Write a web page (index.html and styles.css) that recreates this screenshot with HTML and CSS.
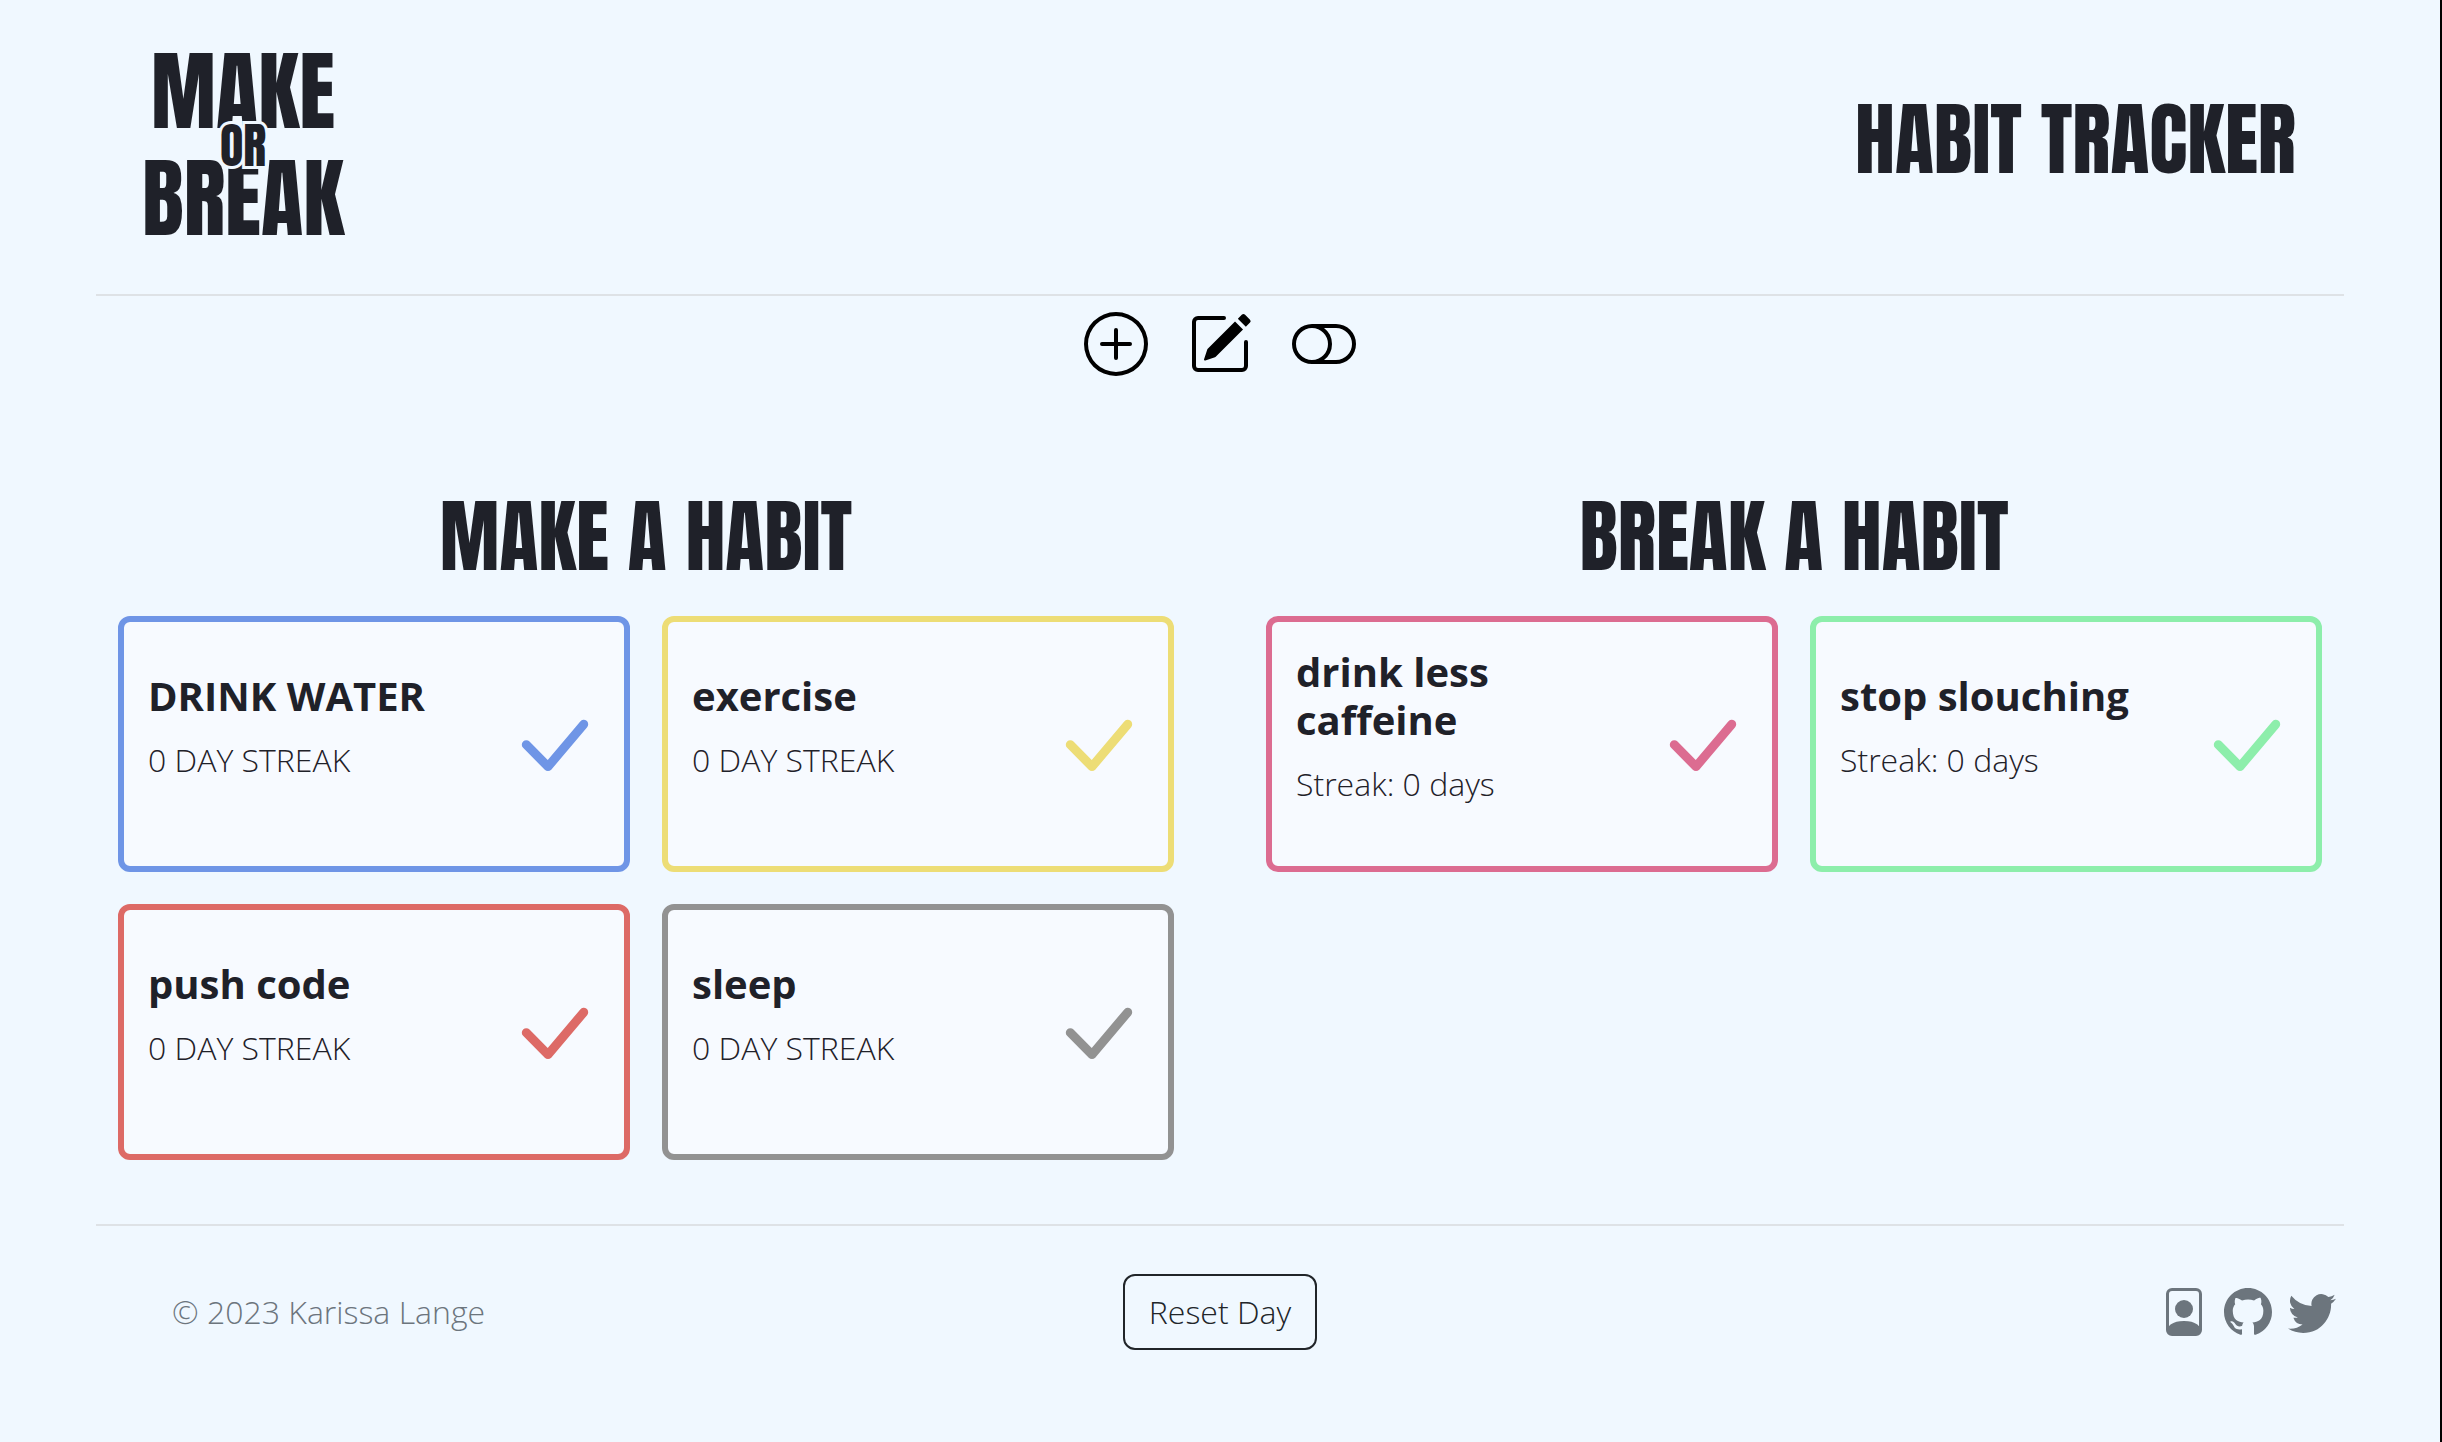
FILE: index.html
```html
<!DOCTYPE html>
<html lang="en">
<head>
<meta charset="utf-8">
<meta name="viewport" content="width=device-width, initial-scale=1">
<title>Make or Break Habit Tracker</title>
<link rel="stylesheet" href="styles.css">
</head>
<body>
<svg class="sprite" aria-hidden="true">
  <symbol id="check" viewBox="0 0 128 128"><path d="M38.3 64.7 60 86.6 95.7 44.3" fill="none" stroke="currentColor" stroke-width="9" stroke-linecap="round" stroke-linejoin="round"/></symbol>
</svg>
<div class="page">
  <header class="header">
    <a class="logo" href="#">
      <span class="logo-line">MAKE</span>
      <span class="logo-or">OR</span>
      <span class="logo-line">BREAK</span>
    </a>
    <h1 class="heading">HABIT TRACKER</h1>
  </header>

  <nav class="toolbar" aria-label="Habit actions">
    <button class="icon-button" type="button" aria-label="Add habit">
      <svg class="icon" viewBox="0 0 16 16"><path d="M8 15A7 7 0 1 1 8 1a7 7 0 0 1 0 14zm0 1A8 8 0 1 0 8 0a8 8 0 0 0 0 16z"/><path d="M8 4a.5.5 0 0 1 .5.5v3h3a.5.5 0 0 1 0 1h-3v3a.5.5 0 0 1-1 0v-3h-3a.5.5 0 0 1 0-1h3v-3A.5.5 0 0 1 8 4z"/></svg>
    </button>
    <button class="icon-button" type="button" aria-label="Edit habits">
      <svg class="icon" viewBox="0 0 16 16"><path d="M15.502 1.94a.5.5 0 0 1 0 .706L14.459 3.69l-2-2L13.502.646a.5.5 0 0 1 .707 0l1.293 1.293zm-1.75 2.456-2-2L4.939 9.21a.5.5 0 0 0-.121.196l-.805 2.414a.25.25 0 0 0 .316.316l2.414-.805a.5.5 0 0 0 .196-.12l6.813-6.814z"/><path fill-rule="evenodd" d="M1 13.5A1.5 1.5 0 0 0 2.5 15h11a1.5 1.5 0 0 0 1.5-1.5v-6a.5.5 0 0 0-1 0v6a.5.5 0 0 1-.5.5h-11a.5.5 0 0 1-.5-.5v-11a.5.5 0 0 1 .5-.5H9a.5.5 0 0 0 0-1H2.5A1.5 1.5 0 0 0 1 2.5v11z"/></svg>
    </button>
    <button class="icon-button" type="button" aria-label="Toggle theme">
      <svg class="icon" viewBox="0 0 16 16"><path d="M11 4a4 4 0 0 1 0 8H8a4.992 4.992 0 0 0 2-4 4.992 4.992 0 0 0-2-4h3zm-6 8a4 4 0 1 1 0-8 4 4 0 0 1 0 8zM0 8a5 5 0 0 0 5 5h6a5 5 0 0 0 0-10H5a5 5 0 0 0-5 5z"/></svg>
    </button>
  </nav>

  <main class="habits">
    <section class="column">
      <h2 class="heading">MAKE A HABIT</h2>
      <div class="cards">
        <article class="card blue">
          <div class="card-text"><h3 class="card-title">DRINK WATER</h3><p class="streak">0 DAY STREAK</p></div>
          <button class="icon-button" type="button" aria-label="Complete drink water"><svg class="check"><use href="#check"/></svg></button>
        </article>
        <article class="card yellow">
          <div class="card-text"><h3 class="card-title">exercise</h3><p class="streak">0 DAY STREAK</p></div>
          <button class="icon-button" type="button" aria-label="Complete exercise"><svg class="check"><use href="#check"/></svg></button>
        </article>
        <article class="card red">
          <div class="card-text"><h3 class="card-title">push code</h3><p class="streak">0 DAY STREAK</p></div>
          <button class="icon-button" type="button" aria-label="Complete push code"><svg class="check"><use href="#check"/></svg></button>
        </article>
        <article class="card gray">
          <div class="card-text"><h3 class="card-title">sleep</h3><p class="streak">0 DAY STREAK</p></div>
          <button class="icon-button" type="button" aria-label="Complete sleep"><svg class="check"><use href="#check"/></svg></button>
        </article>
      </div>
    </section>
    <section class="column">
      <h2 class="heading">BREAK A HABIT</h2>
      <div class="cards">
        <article class="card pink">
          <div class="card-text"><h3 class="card-title">drink less caffeine</h3><p class="streak">Streak: 0 days</p></div>
          <button class="icon-button" type="button" aria-label="Complete drink less caffeine"><svg class="check"><use href="#check"/></svg></button>
        </article>
        <article class="card green">
          <div class="card-text"><h3 class="card-title">stop slouching</h3><p class="streak">Streak: 0 days</p></div>
          <button class="icon-button" type="button" aria-label="Complete stop slouching"><svg class="check"><use href="#check"/></svg></button>
        </article>
      </div>
    </section>
  </main>

  <footer class="footer">
    <p class="copyright">© 2023 Karissa Lange</p>
    <button class="reset" type="button">Reset Day</button>
    <div class="social">
      <a href="#" aria-label="Portfolio"><svg class="social-icon" viewBox="0 0 16 16"><path d="M12 1a1 1 0 0 1 1 1v10.755S12 11 8 11s-5 1.755-5 1.755V2a1 1 0 0 1 1-1h8zM4 0a2 2 0 0 0-2 2v12a2 2 0 0 0 2 2h8a2 2 0 0 0 2-2V2a2 2 0 0 0-2-2H4z"/><path d="M8 10a3 3 0 1 0 0-6 3 3 0 0 0 0 6z"/></svg></a>
      <a href="#" aria-label="GitHub"><svg class="social-icon" viewBox="0 0 16 16"><path d="M8 0C3.58 0 0 3.58 0 8c0 3.54 2.29 6.53 5.47 7.59.4.07.55-.17.55-.38 0-.19-.01-.82-.01-1.49-2.01.37-2.53-.49-2.69-.94-.09-.23-.48-.94-.82-1.13-.28-.15-.68-.52-.01-.53.63-.01 1.08.58 1.23.82.72 1.21 1.87.87 2.33.66.07-.52.28-.87.51-1.07-1.78-.2-3.64-.89-3.64-3.95 0-.87.31-1.59.82-2.15-.08-.2-.36-1.02.08-2.12 0 0 .67-.21 2.2.82.64-.18 1.32-.27 2-.27.68 0 1.36.09 2 .27 1.53-1.04 2.2-.82 2.2-.82.44 1.1.16 1.92.08 2.12.51.56.82 1.27.82 2.15 0 3.07-1.87 3.75-3.65 3.95.29.25.54.73.54 1.48 0 1.07-.01 1.93-.01 2.2 0 .21.15.46.55.38A8.012 8.012 0 0 0 16 8c0-4.42-3.58-8-8-8z"/></svg></a>
      <a href="#" aria-label="Twitter"><svg class="social-icon" viewBox="0 0 16 16"><path d="M5.026 15c6.038 0 9.341-5.003 9.341-9.334 0-.14 0-.282-.006-.422A6.685 6.685 0 0 0 16 3.542a6.658 6.658 0 0 1-1.889.518 3.301 3.301 0 0 0 1.447-1.817 6.533 6.533 0 0 1-2.087.793A3.286 3.286 0 0 0 7.875 6.03a9.325 9.325 0 0 1-6.767-3.429 3.289 3.289 0 0 0 1.018 4.382A3.323 3.323 0 0 1 .64 6.575v.045a3.288 3.288 0 0 0 2.632 3.218 3.203 3.203 0 0 1-.865.115 3.23 3.23 0 0 1-.614-.057 3.283 3.283 0 0 0 3.067 2.277A6.588 6.588 0 0 1 .78 13.58a6.32 6.32 0 0 1-.78-.045A9.344 9.344 0 0 0 5.026 15z"/></svg></a>
    </div>
  </footer>
</div>
</body>
</html>
```
FILE: styles.css
```css
* {
  box-sizing: border-box;
  margin: 0;
  padding: 0;
}

body {
  background: #f0f8ff;
  color: #1f2129;
  font-family: "Open Sans", sans-serif;
  font-size: 32px;
  font-weight: 300;
  line-height: 48px;
}

.sprite {
  position: absolute;
  width: 0;
  height: 0;
}

.page {
  min-height: 100vh;
  padding: 0 96px;
  border-right: 2px solid #000;
}

.header {
  display: flex;
  align-items: center;
  justify-content: space-between;
  padding: 38px 48px 42px 46px;
  border-bottom: 2px solid #dee2e6;
}

.logo {
  position: relative;
  display: flex;
  flex-direction: column;
  align-items: center;
  color: inherit;
  font-family: "Anton", sans-serif;
  font-size: 87px;
  font-weight: 400;
  line-height: 107px;
  text-decoration: none;
}

.logo-or {
  position: absolute;
  top: 84px;
  z-index: 1;
  font-size: 48px;
  line-height: 48px;
  -webkit-text-stroke: 6px #f0f8ff;
  paint-order: stroke fill;
}

.heading {
  font-family: "Anton", sans-serif;
  font-size: 80px;
  font-weight: 400;
  line-height: 96px;
  text-align: center;
}

.header .heading {
  margin-bottom: 12px;
}

.toolbar {
  display: flex;
  justify-content: center;
  gap: 40px;
  padding: 16px 0 112px;
}

.icon-button {
  display: flex;
  background: none;
  border: 0;
  color: inherit;
  cursor: pointer;
}

.icon {
  width: 64px;
  height: 64px;
  fill: #000;
}

.habits {
  display: grid;
  grid-template-columns: 1fr 1fr;
  gap: 92px;
  padding: 0 22px 64px;
}

.cards {
  display: grid;
  grid-template-columns: 1fr 1fr;
  gap: 32px;
  margin-top: 32px;
}

.card {
  display: flex;
  align-items: center;
  min-height: 256px;
  padding: 0 8px 0 24px;
  background: #f7faff;
  border: 6px solid;
  border-radius: 12px;
}

.card-text {
  flex: 1;
  padding-bottom: 32px;
  color: #1f2129;
}

.card-title {
  margin-bottom: 16px;
  font-size: 40px;
  font-weight: 700;
  line-height: 48px;
}

.check {
  width: 128px;
  height: 128px;
}

.blue { color: #6f95e6; }
.yellow { color: #eddd76; }
.red { color: #dd6a66; }
.gray { color: #929292; }
.pink { color: #dc6c91; }
.green { color: #8deeab; }

.footer {
  display: grid;
  grid-template-columns: 1fr auto 1fr;
  align-items: center;
  padding: 48px 8px;
  border-top: 2px solid #dee2e6;
  color: #6c757d;
}

.copyright {
  padding-left: 68px;
}

.reset {
  padding: 12px 24px;
  background: none;
  border: 2px solid #212529;
  border-radius: 12px;
  color: #212529;
  font: inherit;
  cursor: pointer;
}

.social {
  display: flex;
  justify-content: flex-end;
  gap: 16px;
}

.social-icon {
  display: block;
  width: 48px;
  height: 48px;
  fill: #6c757d;
}
```
